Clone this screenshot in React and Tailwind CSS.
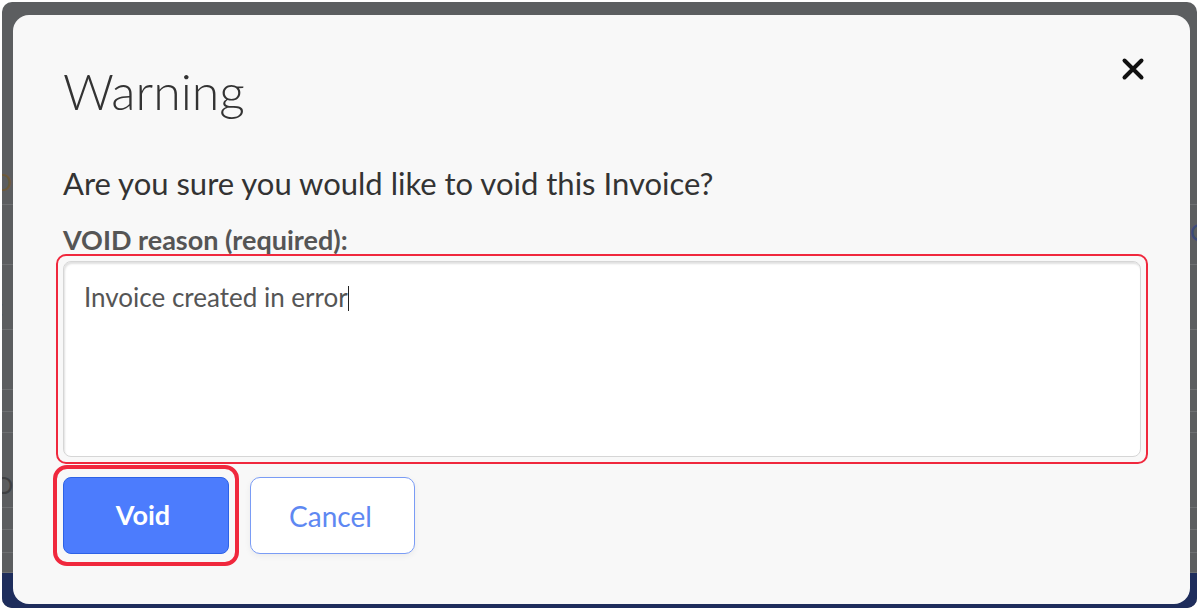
import React from "react";

const font = { fontFamily: "Lato, 'Open Sans', sans-serif" };

// rows of the page that peeks out around the dialog
const pageRows = [
  { h: 203, left: "D", leftColor: "text-[#6d5a3a]" },
  { h: 60, right: "C" },
  { h: 65, left: "t" },
  { h: 60 },
  { h: 22 },
  { h: 21 },
  { h: 75, left: "O" },
  { h: 22 },
  { h: 23 },
  { h: 20 },
];

function PageRow({ row }) {
  return (
    <div className="flex items-end justify-between border-b border-[#6e7072] overflow-hidden" style={{ height: row.h }}>
      <span className={`-ml-[8px] mb-[10px] text-[24px] leading-none ${row.leftColor || "text-[#3f4042]"}`}>
        {row.left || ""}
      </span>
      <span className="-mr-[9px] mb-[20px] text-[24px] leading-none text-[#3b4a7a]">{row.right || ""}</span>
    </div>
  );
}

export default function App() {
  return (
    <div className="w-[1200px] h-[612px] bg-white pt-[2px] pl-[2px] pr-[3px] pb-[4px]" style={font}>
      <div className="grid h-full rounded-[10px] bg-[#5c5e60] overflow-hidden">
        {/* page behind the overlay */}
        <div className="col-start-1 row-start-1 flex flex-col">
          {pageRows.map((row, i) => (
            <PageRow key={i} row={row} />
          ))}
          <div className="flex-1 bg-[#1e2d5c]" />
        </div>

        {/* dialog */}
        <div className="col-start-1 row-start-1 pl-[11px] pt-[13px] pr-[7px] pb-[4px] min-h-0">
          <div className="h-full rounded-[16px] bg-[#f8f8f8] pl-[50px] pr-[42px] pt-[42px]">
            <div className="flex items-start justify-between">
              <h1 className="mt-[9px] text-[50px] leading-none font-light text-[#333]">Warning</h1>
              <button className="mr-[3px] w-[24px] h-[24px] flex items-center justify-center">
                <svg viewBox="0 0 24 24" className="w-[24px] h-[24px]" fill="none" stroke="#111" strokeWidth="4" strokeLinecap="round">
                  <path d="M3.5 3.5L20.5 20.5M20.5 3.5L3.5 20.5" />
                </svg>
              </button>
            </div>

            <p className="mt-[52px] text-[31px] leading-none text-[#333]">
              Are you sure you would like to void this Invoice?
            </p>

            <label className="block mt-[27px] text-[27px] leading-none font-bold text-[#555]">
              VOID reason (required):
            </label>

            <div className="mt-[1px] -ml-[7px] rounded-[10px] border-2 border-[#f0283d] p-[5px]">
              <div className="h-[196px] rounded-[8px] bg-white border border-[#d6d6d6] shadow-[inset_1px_2px_2px_rgba(0,0,0,0.12)] px-[20px] pt-[22px]">
                <span className="text-[26px] leading-none text-[#555]">Invoice created in error</span>
                <span className="inline-block align-[-4px] w-px h-[25px] bg-[#222]" />
              </div>
            </div>

            <div className="mt-[1px] flex items-center gap-[11px] -ml-[10px]">
              <div className="rounded-[14px] border-4 border-[#f0283d] px-[6px] py-[8px]">
                <button className="block w-[166px] h-[77px] pr-[6px] rounded-[8px] bg-[#4c7cfd] border border-[#2d62e6] text-white text-[27px] font-bold">
                  Void
                </button>
              </div>
              <button className="w-[165px] h-[77px] pr-[4px] rounded-[10px] bg-white border border-[#7a9cf5] text-[#5e88f2] text-[28px] shadow-[0_2px_6px_rgba(0,0,0,0.06)]">
                Cancel
              </button>
            </div>
          </div>
        </div>
      </div>
    </div>
  );
}
